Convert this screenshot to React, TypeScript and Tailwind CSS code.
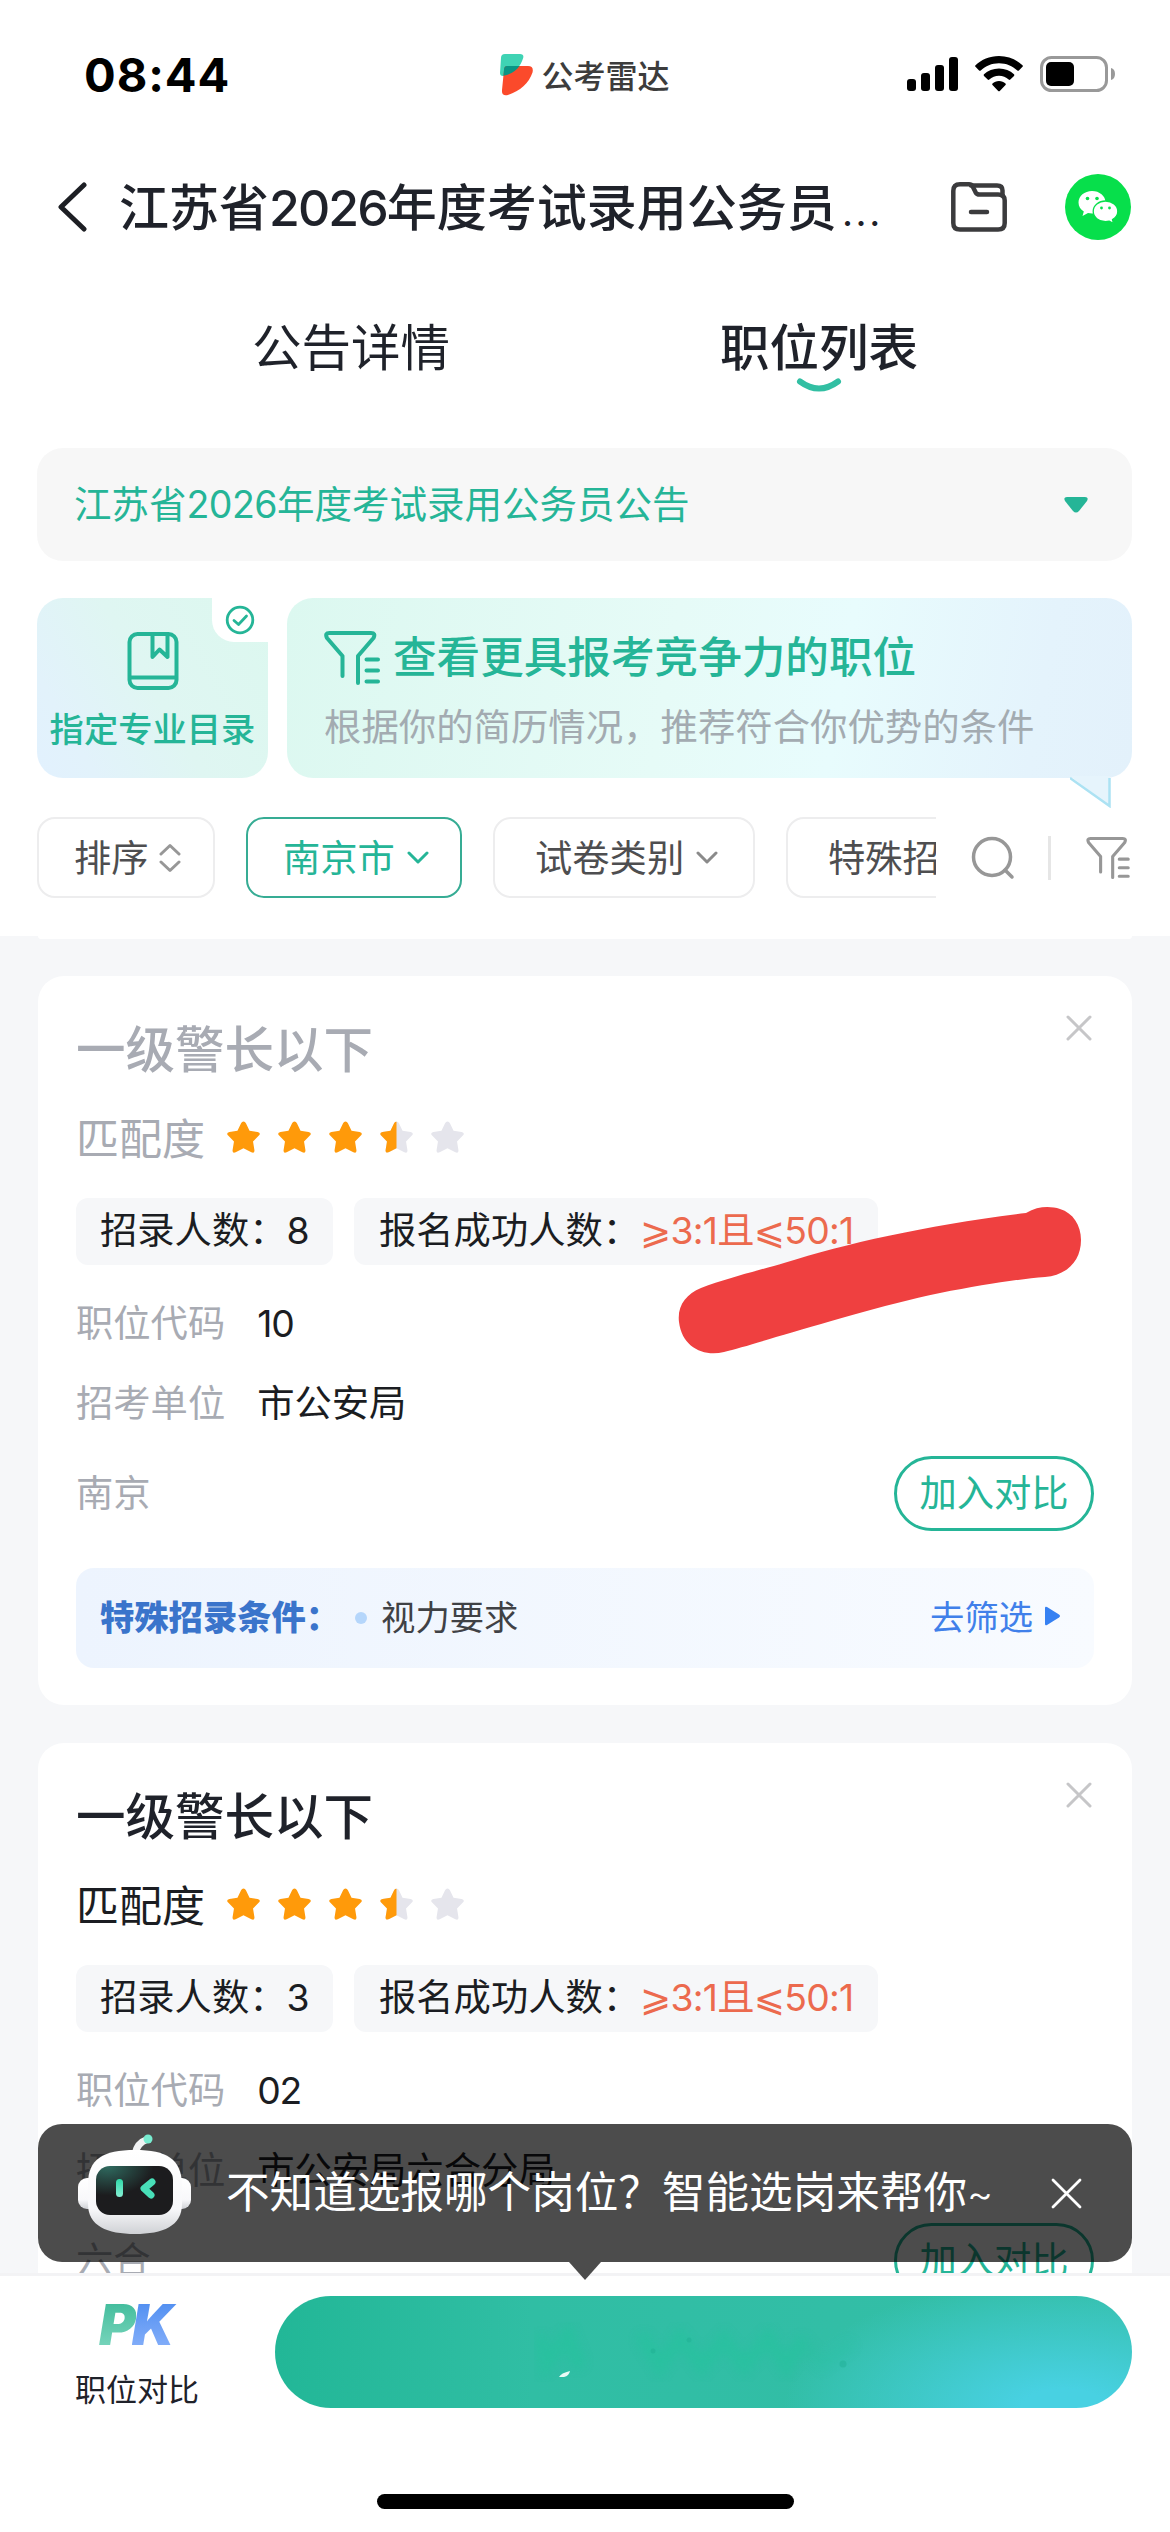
import React from "react";
import { clsx } from "clsx";

interface Job {
  title: string;
  count: string;
  ratio: string;
  code: string;
  unit: string;
  city: string;
  condition?: string;
  viewed?: boolean;
}

const jobs: Job[] = [
  {
    title: "一级警长以下",
    count: "8",
    ratio: "⩾3:1且⩽50:1",
    code: "10",
    unit: "市公安局",
    city: "南京",
    condition: "视力要求",
    viewed: true,
  },
  {
    title: "一级警长以下",
    count: "3",
    ratio: "⩾3:1且⩽50:1",
    code: "02",
    unit: "市公安局六合分局",
    city: "六合",
  },
];

function StatusBar() {
  return (
    <div className="flex h-[148px] shrink-0 items-center justify-between pl-[84px] pr-[54px]">
      <div className="w-[400px] text-[47px] leading-none font-bold tracking-[0.02em] text-black">08:44</div>
      <div className="flex items-center gap-2 pt-0.5">
        <svg width="33" height="42" viewBox="0 0 33 42">
          <path d="M5 0h15q4.500 0 3 4.500C20 14 13 20 3 22Q0 22 0 19L1 4Q1 0 5 0Z" fill="#3fd3b4" />
          <path d="M7 12h21q6 0 4.500 6.500C29 29 20 37 8 41Q1.500 42.500 2 36L4 16Q4 12 7 12Z" fill="#fb4a2b" />
          <path d="M7 12h12.500C16 17 11 20 3.400 21.800L4 16Q4 12 7 12Z" fill="#0a9484" />
        </svg>
        <span className="pt-1 text-[32px] leading-none font-medium text-[#3c3c3c]">公考雷达</span>
      </div>
      <div className="flex w-[430px] items-center justify-end gap-[17px]">
        <svg width="51" height="36" viewBox="0 0 51 36" fill="#000">
          <rect x="0" y="23" width="9" height="12" rx="3" />
          <rect x="14" y="17" width="9" height="18" rx="3" />
          <rect x="28" y="9" width="9" height="26" rx="3" />
          <rect x="42" y="1" width="9" height="34" rx="3" />
        </svg>
        <svg width="48" height="36" viewBox="0 0 48 36" fill="#000">
          <path d="M24 0C14.500 0 6.500 3.600 .5 9.200q-.8.800 0 1.600l3.600 3.700q.8.700 1.600 0C10.500 10 16.800 7.200 24 7.200S37.500 10 42.300 14.500q.8.700 1.600 0l3.600-3.700q.8-.8 0-1.600C41.500 3.600 33.500 0 24 0Z" />
          <path d="M24 12.500c-6 0-11 2.200-15 5.800q-.8.800 0 1.600l3.700 3.700q.8.700 1.600 0c2.600-2.400 6-3.800 9.700-3.800s7.100 1.400 9.700 3.800q.8.700 1.600 0l3.700-3.700q.8-.8 0-1.600c-4-3.600-9-5.800-15-5.800Z" />
          <path d="M24 25c-2.600 0-4.800.9-6.500 2.400q-.8.800 0 1.600l5.700 5.900q.8.800 1.600 0l5.700-5.900q.8-.8 0-1.600C28.800 25.900 26.600 25 24 25Z" />
        </svg>
        <svg width="76" height="36" viewBox="0 0 76 36">
          <rect x="1.500" y="1.500" width="65" height="33" rx="10" fill="none" stroke="#999" strokeWidth="3" />
          <rect x="6" y="6" width="28" height="24" rx="5" fill="#000" />
          <path d="M71 12q4 1 4 6t-4 6Z" fill="#999" />
        </svg>
      </div>
    </div>
  );
}

function TitleBar() {
  return (
    <div className="flex h-[118px] shrink-0 items-center pl-[57px] pr-[39px]">
      <svg width="30" height="50" viewBox="0 0 30 50" fill="none" stroke="#1d1f24" strokeWidth="5" strokeLinecap="round" strokeLinejoin="round">
        <path d="M27 3 4 25 27 47" />
      </svg>
      <h1 className="ml-8 flex-1 pt-[3px] whitespace-nowrap text-[50px] leading-[60px] font-medium text-[#1f222a]">
        江苏省<span className="tracking-[-0.038em]">2026</span>年度考试录用公务员<span className="ml-1 text-[48px] font-light">...</span>
      </h1>
      <svg width="56" height="50" viewBox="0 0 56 50" fill="none" stroke="#3b3b3d" strokeWidth="4.500" strokeLinecap="round" strokeLinejoin="round">
        <path d="M9 2.300h9q2.500 0 3.600 2l3 6q1.200 2.200 4 2.200h18.500q6.600 0 6.600 6V41q0 6.600-6.600 6.600H9Q2.300 47.600 2.300 41V9Q2.300 2.300 9 2.300Z" />
        <path d="M20 3.500h26q5.500 0 5.500 5v5M20 30h16" />
      </svg>
      <svg className="ml-[58px]" width="66" height="66" viewBox="0 0 66 66">
        <circle cx="33" cy="33" r="33" fill="#07df4b" />
        <path d="M27 17c-7.500 0-13.500 5-13.500 11.500 0 3.700 2 7 5.300 9L17.500 42l5.500-3c1.300.3 2.700.5 4 .5 7.500 0 13.500-5 13.500-11.300S34.500 17 27 17Z" fill="#fff" />
        <path d="M40.500 27c-6.800 0-12.300 4.600-12.300 10.300s5.500 10.400 12.300 10.400c1.300 0 2.600-.2 3.800-.5l4.200 2.300-1-3.900c3.200-1.900 5.300-4.900 5.300-8.300C52.800 31.600 47.300 27 40.500 27Z" fill="#fff" stroke="#07df4b" strokeWidth="1.300" />
        <g fill="#07df4b">
          <circle cx="22.500" cy="24.500" r="1.800" />
          <circle cx="32" cy="24.500" r="1.800" />
          <circle cx="36.500" cy="34" r="1.400" />
          <circle cx="44.500" cy="34" r="1.400" />
        </g>
      </svg>
    </div>
  );
}

function Tabs() {
  return (
    <div className="flex h-[182px] shrink-0 px-[117px] pt-[52px] text-[49.500px] leading-[60px] text-[#1f222a]">
      <div className="flex-1 text-center">公告详情</div>
      <div className="flex flex-1 flex-col items-center">
        <span className="font-medium">职位列表</span>
        <svg width="46" height="16" viewBox="0 0 46 16" fill="none" stroke="#32bfa3" strokeWidth="6" strokeLinecap="round">
          <path d="M4 3.500Q23 17.500 42 3.500" />
        </svg>
      </div>
    </div>
  );
}

interface FilterIconProps {
  width: number;
  height: number;
  color: string;
}

function FilterIcon({ width, height, color }: FilterIconProps) {
  return (
    <svg className="shrink-0" width={width} height={height} viewBox="0 0 56 54" fill="none" stroke={color} strokeWidth="4" strokeLinecap="round" strokeLinejoin="round">
      <path d="M18.500 45V25L3 7Q.5 2 5.500 2H47q5 0 2.500 5L34 25V52M42.500 28.500h11.500M42.500 39.500h11.500M42.500 50.500h11.500" />
    </svg>
  );
}

function PromoCards() {
  return (
    <div className="mt-[37px] flex gap-[19px]">
      <div className="relative flex h-[180px] w-[231px] flex-col items-center rounded-[26px] bg-[linear-gradient(60deg,#e2f1fe_0%,#e2f2fb_18%,#dff6f2_50%,#dcf8ef_100%)] pt-[34px]">
        <svg width="52" height="58" viewBox="0 0 52 58" fill="none" stroke="#25b597" strokeWidth="4" strokeLinejoin="round">
          <rect x="2.500" y="2" width="47" height="54" rx="8" />
          <path d="M2.500 45.500h47M25.500 2v23l7-7.500 8 7.500V2" />
        </svg>
        <span className="mt-[19px] whitespace-nowrap text-[34.300px] leading-[42px] font-medium text-[#25b597]">指定专业目录</span>
        <div className="absolute top-0 right-0 flex h-11 w-14 items-center justify-center rounded-bl-[22px] bg-white">
          <svg width="30" height="30" viewBox="0 0 30 30" fill="none" stroke="#25b597" strokeWidth="2.800" strokeLinecap="round" strokeLinejoin="round">
            <circle cx="15" cy="15" r="12.800" />
            <path d="m9 15.500 4.500 4 8-8.500" />
          </svg>
        </div>
      </div>
      <div className="relative flex h-[180px] flex-1 flex-col rounded-[26px] bg-[linear-gradient(100deg,#dcf8f0_0%,#e6fbf7_45%,#e8fcfd_65%,#e4f3fc_88%,#e3f1fb_100%)] pt-[30px] pl-[37px]">
        <div className="flex items-center gap-[13px]">
          <FilterIcon width={56} height={56} color="#25b597" />
          <span className="text-[43.600px] leading-[60px] font-medium text-[#25b597]">查看更具报考竞争力的职位</span>
        </div>
        <span className="mt-[16px] text-[37.400px] leading-[48px] text-[#a3abb1]">根据你的简历情况，推荐符合你优势的条件</span>
        <svg className="absolute right-[20px] bottom-[-30px]" width="42" height="32" viewBox="0 0 42 32">
          <path d="M0 0h40v30Z" fill="#e6f4fc" />
          <path d="M0 2 39.500 30V2" fill="none" stroke="#ace2f3" strokeWidth="2.500" />
        </svg>
      </div>
    </div>
  );
}

function Chevron({ color }: { color: string }) {
  return (
    <svg width="22" height="14" viewBox="0 0 22 14" fill="none" stroke={color} strokeWidth="3" strokeLinecap="round" strokeLinejoin="round">
      <path d="m2 2 9 9 9-9" />
    </svg>
  );
}

function FilterRow() {
  const chip = "flex h-[81px] shrink-0 items-center rounded-[18px] border-2";
  return (
    <div className="mt-[39px] flex items-center">
      <div className="flex w-[899px] shrink-0 gap-[31px] overflow-hidden whitespace-nowrap text-[37.300px] leading-[44px] text-[#4e4e50]">
        <div className={clsx(chip, "w-[178px] gap-2.5 border-[#ededee] pl-[35px]")}>
          <span className="pt-0.5">排序</span>
          <svg width="22" height="30" viewBox="0 0 22 30" fill="none" stroke="#979797" strokeWidth="3" strokeLinecap="round" strokeLinejoin="round">
            <path d="m2 11 9-8.500L20 11M2 19l9 8.500L20 19" />
          </svg>
        </div>
        <div className={clsx(chip, "w-[216px] gap-3 border-[#36ac94] pl-[35px] text-[#25b597]")}>
          <span className="pt-0.5">南京市</span>
          <Chevron color="#25b597" />
        </div>
        <div className={clsx(chip, "w-[262px] gap-3 border-[#ededee] pl-10")}>
          <span className="pt-0.5">试卷类别</span>
          <Chevron color="#8a8a8a" />
        </div>
        <div className={clsx(chip, "w-[300px] border-[#ededee] pl-10")}>
          <span className="pt-0.5">特殊招</span>
        </div>
      </div>
      <svg className="ml-[35px] shrink-0" width="44" height="44" viewBox="0 0 44 44" fill="none" stroke="#979797" strokeWidth="3.500" strokeLinecap="round">
        <circle cx="21" cy="21" r="18.500" />
        <path d="m34 34 7 7" />
      </svg>
      <div className="ml-[33px] h-11 w-[3px] shrink-0 bg-[#e6e6e6]" />
      <div className="ml-[35px]">
        <FilterIcon width={44} height={42} color="#979797" />
      </div>
    </div>
  );
}

const STAR =
  "M16.500 1.500q1.600 0 2.400 1.700l3.300 6.900 7.600 1.200q3.500.7 1.200 3.400l-5.500 5.600 1.300 8q.4 3.600-2.900 2.200l-7.400-3.900-7.400 3.900q-3.300 1.400-2.900-2.200l1.300-8L2 14.700q-2.300-2.700 1.200-3.400l7.600-1.200 3.300-6.900q.8-1.700 2.400-1.700Z";

function Stars({ score }: { score: number }) {
  return (
    <div className="flex gap-4">
      {Array.from({ length: 5 }).map((_, i) => (
        <svg key={i} width="35" height="36" viewBox="0 0 33 34">
          <path d={STAR} fill={score >= i + 1 ? "#ff9a0a" : "#e5e5ec"} />
          {score > i && score < i + 1 && (
            <path d={STAR} fill="#ff9a0a" style={{ clipPath: "inset(0 50% 0 0)" }} />
          )}
        </svg>
      ))}
    </div>
  );
}

function JobCard({ job }: { job: Job }) {
  return (
    <div className="relative shrink-0 rounded-[26px] bg-white px-[38px] pt-11 pb-[37px] text-[37.300px] text-[#1b1d22]">
      <h2 className={clsx("text-[49.500px] leading-[60px] font-medium", job.viewed ? "text-[#a8abb3]" : "text-[#1f222a]")}>{job.title}</h2>
      <svg className="absolute top-[39px] right-[40px]" width="26" height="26" viewBox="0 0 26 26" stroke="#c6c6c8" strokeWidth="3" strokeLinecap="round">
        <path d="m2 2 22 22M24 2 2 24" />
      </svg>

      {/* Match score */}
      <div className="mt-7 flex h-[60px] items-center gap-[21px]">
        <span className={clsx("pt-0.5 text-[43px] leading-none", job.viewed ? "text-[#a8abb3]" : "text-[#1b1d22]")}>匹配度</span>
        <Stars score={3.5} />
      </div>

      <div className="mt-[30px] flex gap-[21px] leading-[66px]">
        <div className="h-[67px] w-[257px] rounded-xl bg-[#f6f7f9] pl-6">招录人数：{job.count}</div>
        <div className="h-[67px] w-[524px] rounded-xl bg-[#f6f7f9] pl-[25px] whitespace-nowrap">
          报名成功人数：
          <span className="tracking-[-0.02em] text-[#ec6a4e]">{job.ratio}</span>
        </div>
      </div>

      <div className="mt-[29px] flex flex-col leading-[60px]">
        <div className="flex gap-8">
          <span className="text-[#a8abb3]">职位代码</span>
          <span className="tracking-[-0.03em]">{job.code}</span>
        </div>
        <div className="mt-5 flex gap-8">
          <span className="text-[#a8abb3]">招考单位</span>
          <span>{job.unit}</span>
        </div>
      </div>

      <div className="mt-[22px] flex h-[75px] items-center justify-between">
        <span className="leading-none text-[#a8abb3]">{job.city}</span>
        <div className="flex h-[75px] w-[200px] items-center justify-center rounded-full border-3 border-[#25b597] leading-none text-[#25b597]">
          加入对比
        </div>
      </div>

      {job.condition && (
        <div className="mt-[37px] flex h-[100px] items-center rounded-[18px] bg-gradient-to-r from-[#edf4fe] to-[#f8fbff] pr-[33px] pl-6 text-[34.300px] leading-none">
          <span className="font-black text-[#3a74cb]">特殊招录条件：</span>
          <span className="ml-[15px] h-3 w-3 rounded-full bg-[#b5d6fb]" />
          <span className="ml-3.5 flex-1 text-[#3f4145]">{job.condition}</span>
          <span className="text-[#4080ea]">去筛选</span>
          <svg className="ml-[11px] -mt-1" width="17" height="20" viewBox="0 0 17 20">
            <path d="M1 2q0-2 2-1l12 7.500q2 1.500 0 3L3 19q-2 1-2-1Z" fill="#3681f2" />
          </svg>
        </div>
      )}
    </div>
  );
}

function Robot() {
  return (
    <svg className="absolute top-[10px] left-[39px]" width="118" height="102" viewBox="0 0 118 102">
      <defs>
        <linearGradient id="shell" x1="0" y1="0" x2="0" y2="1">
          <stop offset="0" stopColor="#fff" />
          <stop offset=".7" stopColor="#f8f8fa" />
          <stop offset="1" stopColor="#cfd1d5" />
        </linearGradient>
        <radialGradient id="visor" cx=".15" cy="0" r=".6">
          <stop offset="0" stopColor="#2f6b60" />
          <stop offset="1" stopColor="#1c1c1e" />
        </radialGradient>
        <linearGradient id="eye" x1="0" y1="0" x2="0" y2="1">
          <stop offset="0" stopColor="#2fd9a8" />
          <stop offset="1" stopColor="#86efd4" />
        </linearGradient>
      </defs>
      <path d="M58 20q2-11 12-14.500" fill="none" stroke="#f1f2f3" strokeWidth="7" strokeLinecap="round" />
      <circle cx="71" cy="5" r="4.500" fill="#78ecd0" />
      <rect x="1" y="44" width="24" height="31" rx="9" fill="url(#shell)" />
      <rect x="90" y="44" width="24" height="31" rx="9" fill="url(#shell)" />
      <path d="M58 16c32 0 46 9 47 34v20c0 22-19 30-47 30s-47-8-47-30V50c0-25 15-34 47-34Z" fill="url(#shell)" />
      <rect x="19" y="32" width="77" height="49" rx="14" fill="url(#visor)" />
      <rect x="39" y="45" width="7" height="18" rx="3.500" fill="url(#eye)" />
      <path d="m75 48-8 6.500 7 6.500" fill="none" stroke="#48dfb8" strokeWidth="7" strokeLinecap="round" strokeLinejoin="round" />
    </svg>
  );
}

function AssistantTip() {
  return (
    <div className="absolute top-[-152px] left-[38px] z-10 flex h-[138px] w-[1094px] items-center rounded-[24px] bg-black/70 pr-[50px] pl-[188px]">
      <Robot />
      <span className="flex-1 whitespace-nowrap text-[43.600px] leading-none text-white">
        不知道选报哪个岗位？智能选岗来帮你<span className="text-[40px] font-light">~</span>
      </span>
      <svg width="31" height="31" viewBox="0 0 31 31" stroke="#fff" strokeWidth="2.800" strokeLinecap="round">
        <path d="m2 2 27 27M29 2 2 29" />
      </svg>
      <svg className="absolute top-full left-[531px]" width="32" height="18" viewBox="0 0 32 18">
        <path d="M0 0h32L16 18Z" fill="#4c4c4c" />
      </svg>
    </div>
  );
}

function BottomBar() {
  return (
    <div className="relative h-[259px] shrink-0 border-t-3 border-[#f3f3f5] bg-white">
      <AssistantTip />
      <div className="flex pt-5 pr-[38px]">
        <div className="flex w-[275px] shrink-0 flex-col pl-[75px] pt-1">
          <div className="pl-6 text-[56px] leading-[50px] font-black tracking-[-0.07em] italic">
            <span className="bg-gradient-to-b from-[#2fb795] to-[#83dbc4] bg-clip-text pr-1 text-transparent">P</span>
            <span className="-ml-1 bg-gradient-to-b from-[#4588ef] to-[#8fb5fb] bg-clip-text pr-2 text-transparent">K</span>
          </div>
          <span className="mt-[20px] text-[31px] leading-[40px] text-[#1f222a]">职位对比</span>
        </div>
        <div className="flex h-28 flex-1 items-center justify-center overflow-hidden rounded-full bg-[radial-gradient(ellipse_280px_130px_at_92%_100%,#48d1e2_0%,#48d1e2_15%,transparent_100%),linear-gradient(90deg,#22b797,#30bea4_30%,#34bea8)]">
          {/* Faint smudge on the button face */}
          <svg width="340" height="60" viewBox="0 0 340 60" fill="none" strokeLinecap="round">
            <g stroke="#22c49b" strokeWidth="14" opacity=".45" style={{ filter: "blur(5px)" }}>
              <path d="M8 20 12 42 34 14 44 40M110 18l16 26 20-28 22 28 22-26 20 26 24-28 18 28 14-22" />
              <path d="M268 20l20 22 26-18" opacity=".4" />
            </g>
            <g fill="#1aa98d" opacity=".35">
              <circle cx="119" cy="29" r="2.500" />
              <circle cx="155" cy="18" r="2.500" />
              <circle cx="309" cy="42" r="3.500" />
            </g>
            <path d="M25 55q2-4 11-6-1 5-6 6Z" fill="#eafaf5" />
          </svg>
        </div>
      </div>
      <div className="mx-auto mt-[84px] h-[15px] w-[417px] rounded-full bg-black" />
    </div>
  );
}

export default function App() {
  return (
    <div className="flex h-[2532px] w-[1170px] flex-col overflow-hidden bg-[#f6f7f9] font-['Inter','Noto_Sans_CJK_SC','DejaVu_Sans',sans-serif]">
      <div className="flex h-[936px] shrink-0 flex-col bg-white">
        <StatusBar />
        <TitleBar />
        <Tabs />
        <div className="px-[37px] pr-[38px]">
          <div className="flex h-[113px] items-center justify-between rounded-[26px] bg-[#f7f7f7] pr-[43px] pl-[37px] text-[37.500px] leading-none text-[#25b597]">
            <span>
              江苏省<span className="tracking-[-0.015em]">2026</span>年度考试录用公务员公告
            </span>
            <svg width="26" height="18" viewBox="0 0 26 18">
              <path d="M4 1h18q4 0 2 4l-8 10q-3 3-6 0L2 5q-2-4 2-4Z" fill="#25b597" />
            </svg>
          </div>
          <PromoCards />
          <FilterRow />
        </div>
      </div>

      <div className="flex flex-1 flex-col overflow-hidden px-[38px]">
        {/* Bottom edge of the card scrolled under the header */}
        <div className="h-[3px] shrink-0 rounded-b-[26px] bg-white" />
        <div className="relative mt-[37px] flex flex-col gap-[38px]">
          {jobs.map((job) => (
            <JobCard key={job.code} job={job} />
          ))}
          <svg className="absolute top-[229px] left-[640px]" width="406" height="150" viewBox="0 0 406 150">
            <path
              d="M23 83C52 72 86 64 106 58C170 38 250 20 348 8C360 1 372 1 382 4C395 8 403 20 403 35C403 55 390 70 367 72C340 74 304 80 262 88C205 100 140 120 98 132C76 139 58 144 46 147C25 152 4 142 1 117C-1 101 8 89 23 83Z"
              fill="#ef4040"
            />
          </svg>
        </div>
      </div>

      <BottomBar />
    </div>
  );
}
